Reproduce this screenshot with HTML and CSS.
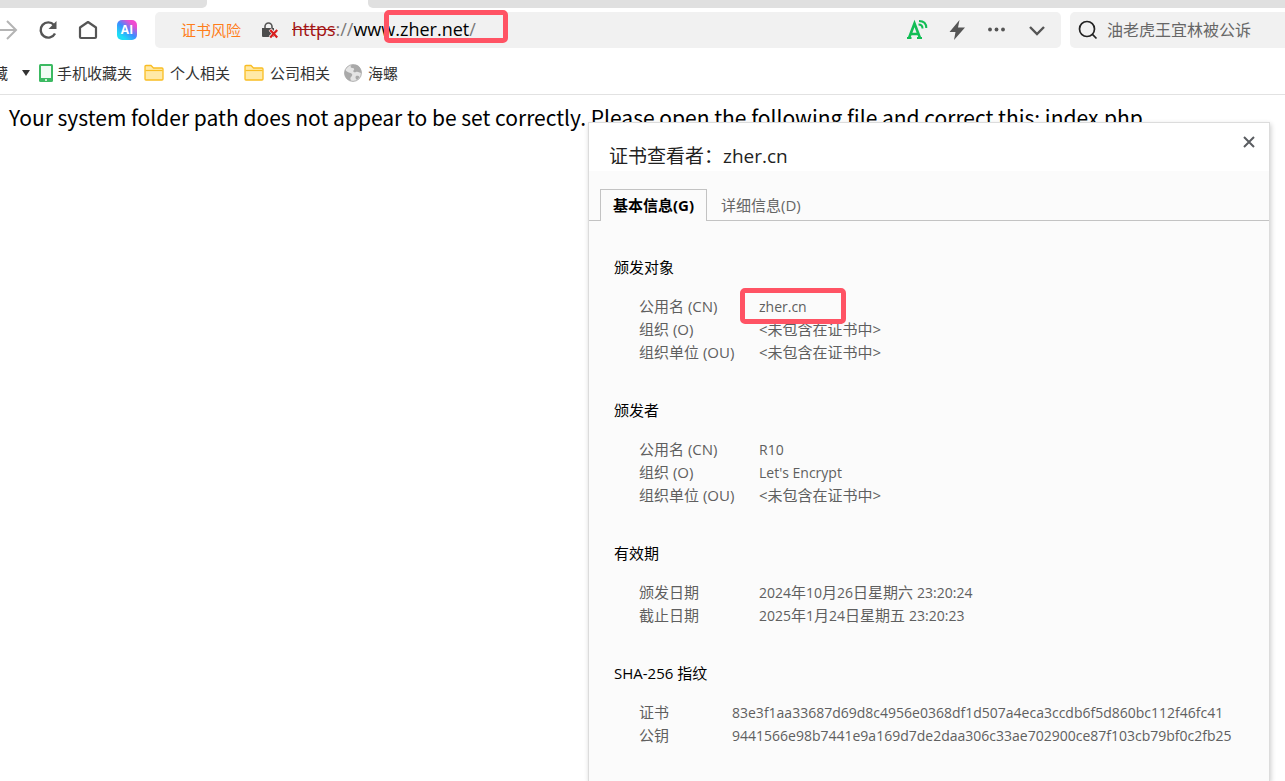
FILE: index.html
```html
<!DOCTYPE html>
<html lang="zh-CN">
<head>
    <meta charset="UTF-8">
    <title>zher.net</title>
    <link rel="stylesheet" href="styles.css">
</head>
<body>
<div class="tabstrip">
    <div class="strip-left"></div>
    <div class="strip-right"></div>
</div>

<div class="toolbar">
    <div class="nav">
        <button class="icon-btn forward" aria-label="前进">
            <svg width="24" height="24" viewBox="0 0 24 24" fill="none" stroke="#b4b4b4" stroke-width="2"><path d="M0 12H20M11 3l9 9-9 9"/></svg>
        </button>
        <button class="icon-btn" aria-label="刷新">
            <svg width="24" height="24" viewBox="0 0 24 24"><path d="M18 7A7.600 7.600 0 1 0 19 15.500" fill="none" stroke="#555" stroke-width="2.400"/><path d="M20.500 3v8h-8z" fill="#555"/></svg>
        </button>
        <button class="icon-btn" aria-label="主页">
            <svg width="24" height="24" viewBox="0 0 24 24" fill="none" stroke="#555" stroke-width="2.200" stroke-linejoin="round"><path d="M4 9.500L12 4l8 5.500V19a1 1 0 0 1-1 1H5a1 1 0 0 1-1-1z"/></svg>
        </button>
        <button class="icon-btn ai">AI</button>
    </div>
    <div class="address">
        <span class="risk">证书风险</span>
        <svg class="lock" width="18" height="18" viewBox="0 0 18 18"><path d="M4 8V5.500a3.500 3.500 0 0 1 7 0V8" fill="none" stroke="#555" stroke-width="1.600"/><path d="M1 7h12v9H2a1 1 0 0 1-1-1z" fill="#4d4d4d"/><path d="M9 8.500l7.500 8M16.500 8.500l-7.500 8" stroke="#f1f1f1" stroke-width="3.600"/><path d="M9.200 9l7 7.500M16.200 9l-7 7.500" stroke="#d81e1e" stroke-width="2.200"/></svg>
        <div class="url" role="textbox" aria-label="网址" contenteditable="true" spellcheck="false"><span class="scheme">https</span><span class="dim">://</span>www.zher.net<span class="dim">/</span></div>
        <div class="mark mark-url"></div>
        <div class="tools">
            <button class="icon-btn" aria-label="朗读">
                <svg width="24" height="24" viewBox="0 0 24 24" fill="none" stroke="#12bd55"><path d="M2 20h4.500M12 20h5" stroke-width="2"/><path d="M4 20L9.500 5.500 15 20M6.500 16h7" stroke-width="2.600"/><path d="M13.500 6.500c2.500 0 4 1.500 4 4M14 3c4.500 0 7.300 2.500 7.300 7" stroke-width="2"/></svg>
            </button>
            <button class="icon-btn" aria-label="极速模式">
                <svg width="24" height="24" viewBox="0 0 24 24" fill="#555"><path d="M14.500 2L4.500 14h6l-1.500 8 11-12.500h-7z"/></svg>
            </button>
            <button class="icon-btn" aria-label="更多">
                <svg width="24" height="24" viewBox="0 0 24 24" fill="#555"><circle cx="5" cy="11.500" r="1.900"/><circle cx="11.500" cy="11.500" r="1.900"/><circle cx="18" cy="11.500" r="1.900"/></svg>
            </button>
            <button class="icon-btn" aria-label="展开">
                <svg width="24" height="24" viewBox="0 0 24 24" fill="none" stroke="#555" stroke-width="2.400"><path d="M5 9l7 7 7-7"/></svg>
            </button>
        </div>
    </div>
    <label class="search">
        <svg width="20" height="20" viewBox="0 0 20 20" fill="none" stroke="#222" stroke-width="1.700"><circle cx="9" cy="9" r="7.500"/><path d="M14.200 14.200L18.500 18.500"/></svg>
        <input type="text" aria-label="搜索" placeholder="油老虎王宜林被公诉">
    </label>
</div>

<div class="bookmarks">
    <a class="fav" href="#"><span>藏</span><svg width="8" height="6" viewBox="0 0 8 6"><path d="M0 0h8L4 6z" fill="#333"/></svg></a>
    <a class="phone" href="#">
        <svg width="14" height="18" viewBox="0 0 14 18"><rect width="14" height="18" rx="1.500" fill="#3cba62"/><path d="M2 2h10v12H2z" fill="#f2fcf5"/><path d="M6 15.200h2v1.500H6z" fill="#fff"/></svg>
        <span>手机收藏夹</span>
    </a>
    <a class="folder" href="#">
        <svg width="20" height="18" viewBox="0 0 20 18"><path d="M1 2.500a1 1 0 0 1 1-1h5l2.500 2.500H18a1 1 0 0 1 1 1V15a1 1 0 0 1-1 1H2a1 1 0 0 1-1-1z" fill="#ffe9a6" stroke="#f9bd22" stroke-width="1.300"/><path d="M1.500 6.500h17" stroke="#f9bd22" stroke-width="1.200"/></svg>
        <span>个人相关</span>
    </a>
    <a class="folder" href="#">
        <svg width="20" height="18" viewBox="0 0 20 18"><path d="M1 2.500a1 1 0 0 1 1-1h5l2.500 2.500H18a1 1 0 0 1 1 1V15a1 1 0 0 1-1 1H2a1 1 0 0 1-1-1z" fill="#ffe9a6" stroke="#f9bd22" stroke-width="1.300"/><path d="M1.500 6.500h17" stroke="#f9bd22" stroke-width="1.200"/></svg>
        <span>公司相关</span>
    </a>
    <a class="site" href="#">
        <svg width="18" height="18" viewBox="0 0 18 18"><circle cx="9" cy="9" r="8.400" fill="#e4e4e4" stroke="#b0b0b0"/><path d="M1 5.500C2.500 8 4 8 6.500 9s2 2.500.5 4 0 2.500 0 4C3 16 .5 13 .5 9zM7.500 1c-1.500 2-1 3 1 3s2 1.500 1 2.500 1 2.500 2.500 1.500 3 .5 5.500 1c0-4-2-7.500-5.500-8.300zM12 12c1.500-.5 3 0 3.500 1l-2.500 3c-1.500-1-2-3-1-4z" fill="#a9a9a9"/></svg>
        <span>海螺</span>
    </a>
</div>

<p class="message">Your system folder path does not appear to be set correctly. Please open the following file and correct this: index.php</p>

<div class="dialog" role="dialog" aria-labelledby="title">
    <div class="head">
        <h1 id="title">证书查看者：zher.cn</h1>
        <button class="close" aria-label="关闭">
            <svg width="12" height="12" viewBox="0 0 12 12" stroke="#5a5d61" stroke-width="2"><path d="M1 1l10 10M11 1L1 11"/></svg>
        </button>
    </div>
    <div class="tabs" role="tablist">
        <button class="tab active" role="tab" aria-selected="true">基本信息(G)</button>
        <button class="tab" role="tab" aria-selected="false">详细信息(D)</button>
    </div>
    <div class="info">
        <section>
            <h2>颁发对象</h2>
            <table>
                <tr><th scope="row">公用名 (CN)</th><td class="marked"><span class="latin">zher.cn</span><div class="mark mark-cn"></div></td></tr>
                <tr><th scope="row">组织 (O)</th><td>&lt;未包含在证书中&gt;</td></tr>
                <tr><th scope="row">组织单位 (OU)</th><td>&lt;未包含在证书中&gt;</td></tr>
            </table>
        </section>
        <section>
            <h2>颁发者</h2>
            <table>
                <tr><th scope="row">公用名 (CN)</th><td><span class="latin">R10</span></td></tr>
                <tr><th scope="row">组织 (O)</th><td><span class="latin">Let's Encrypt</span></td></tr>
                <tr><th scope="row">组织单位 (OU)</th><td>&lt;未包含在证书中&gt;</td></tr>
            </table>
        </section>
        <section>
            <h2>有效期</h2>
            <table>
                <tr><th scope="row">颁发日期</th><td><span class="latin">2024</span>年<span class="latin">10</span>月<span class="latin">26</span>日星期六 <span class="latin">23:20:24</span></td></tr>
                <tr><th scope="row">截止日期</th><td><span class="latin">2025</span>年<span class="latin">1</span>月<span class="latin">24</span>日星期五 <span class="latin">23:20:23</span></td></tr>
            </table>
        </section>
        <section>
            <h2>SHA-256 指纹</h2>
            <table class="hash">
                <tr><th scope="row">证书</th><td><span class="latin">83e3f1aa33687d69d8c4956e0368df1d507a4eca3ccdb6f5d860bc112f46fc41</span></td></tr>
                <tr><th scope="row">公钥</th><td><span class="latin">9441566e98b7441e9a169d7de2daa306c33ae702900ce87f103cb79bf0c2fb25</span></td></tr>
            </table>
        </section>
    </div>
</div>
</body>
</html>
```
FILE: styles.css
```css
*{
    margin:0;
    padding:0;
    box-sizing: border-box;
}
body{
    min-height: 100vh;
    position: relative;
    overflow: hidden;
    background-color: #fff;
    font-family: "Open Sans", "Noto Sans CJK SC", sans-serif;
    font-size: 15px;
}
button{
    border: none;
    background: none;
    font-family: inherit;
    cursor: pointer;
}
svg{
    display: block;
    flex: none;
}

/* 标签栏 */
.tabstrip{
    display: flex;
    gap: 161px;
    height: 8px;
}
.strip-left{
    width: 207px;
    background-color: #e0e0e0;
    border-bottom-right-radius: 5px;
}
.strip-right{
    flex: 1;
    background-color: #e0e0e0;
    border-bottom-left-radius: 5px;
}

/* 工具栏 */
.toolbar{
    display: flex;
    padding-top: 4px;
    height: 40px;
}
.nav{
    display: flex;
    align-items: center;
    gap: 16px;
    width: 155px;
    flex: none;
}
.icon-btn{
    width: 24px;
    height: 24px;
    flex: none;
}
.forward{
    margin-left: -4px;
}
.ai{
    width: 20px;
    height: 20px;
    margin-left: 1px;
    border-radius: 5px;
    background: linear-gradient(40deg, #1edcf5 20%, #3c8cff 50%, #f04bd0 80%);
    color: #fff;
    font-size: 12px;
    font-weight: bold;
    line-height: 20px;
    text-align: center;
}
.address{
    flex: 1;
    display: flex;
    align-items: center;
    position: relative;
    height: 36px;
    padding-left: 26px;
    padding-right: 12px;
    background-color: #f1f1f1;
    border-radius: 5px;
}
.risk{
    padding-bottom: 2px;
    color: #ff7d1a;
}
.lock{
    margin-left: 20px;
}
.url{
    margin-left: 13px;
    padding-bottom: 2px;
    font-size: 18px;
    line-height: 24px;
    color: #000;
    outline: none;
}
.scheme{
    color: #a31515;
    text-decoration: line-through;
}
.dim{
    color: #7a7a7a;
}
.tools{
    display: flex;
    gap: 16px;
    margin-left: auto;
}
.search{
    display: flex;
    align-items: center;
    gap: 9px;
    width: 215px;
    height: 36px;
    margin-left: 9px;
    padding-left: 8px;
    background-color: #f1f1f1;
    border-radius: 5px 0 0 5px;
}
.search input{
    width: 160px;
    border: none;
    outline: none;
    background: none;
    font-family: inherit;
    font-size: 16px;
}
.search input::placeholder{
    color: #666;
}

/* 收藏栏 */
.bookmarks{
    display: flex;
    align-items: center;
    gap: 12px;
    height: 47px;
    padding-top: 3px;
    border-bottom: 1px solid #e2e2e2;
    overflow: hidden;
}
.bookmarks a{
    display: flex;
    align-items: center;
    gap: 6px;
    height: 22px;
    color: #333;
    text-decoration: none;
    white-space: nowrap;
}
.bookmarks .fav{
    gap: 14px;
    margin-left: -7px;
    margin-right: -3px;
}
.bookmarks .phone{
    gap: 4px;
}
.bookmarks .folder{
    margin-right: 2px;
}

/* 页面内容 */
.message{
    padding: 8px 9px;
    font-family: "Noto Sans CJK SC", sans-serif;
    font-size: 21px;
    line-height: 28px;
    color: #000;
    white-space: nowrap;
}

/* 证书窗口 */
.dialog{
    position: absolute;
    top: 122px;
    right: 15px;
    bottom: 0;
    width: 682px;
    background-color: #fbfbfb;
    border: 1px solid #dcdcdc;
    border-bottom: none;
    box-shadow: 1px 2px 5px rgba(0,0,0,.2);
}
.head{
    display: flex;
    justify-content: space-between;
    height: 48px;
    padding-left: 20px;
    padding-right: 14px;
    background-color: #fff;
}
.head h1{
    padding-top: 19px;
    font-size: 19px;
    font-weight: normal;
    line-height: 28px;
    color: #222;
}
.close{
    align-self: flex-start;
    margin-top: 13px;
}
.tabs{
    display: flex;
    padding: 18px 11px 0;
    height: 50px;
    border-bottom: 1px solid #c3c3c3;
}
.tab{
    height: 32px;
    padding: 0 13px 2px;
    border: 1px solid transparent;
    border-bottom: none;
    font-size: 15px;
    color: #666;
}
.tab.active{
    padding: 0 12px 2px;
    border-color: #c3c3c3;
    background-color: #fbfbfb;
    font-weight: bold;
    color: #000;
}
.info{
    padding: 35px 25px 0;
}
section{
    margin-bottom: 35px;
}
h2{
    margin-bottom: 17px;
    font-size: 15px;
    font-weight: normal;
    line-height: 22px;
    color: #000;
}
table{
    margin-left: 25px;
    border-collapse: collapse;
}
th{
    width: 120px;
    font-weight: normal;
    text-align: left;
}
th,
td{
    height: 23px;
    line-height: 23px;
    color: #5f5f5f;
    white-space: nowrap;
}
.hash th{
    width: 93px;
}
.latin{
    font-size: 14px;
}

/* 红框标记 */
.mark{
    position: absolute;
    border: 5px solid #ff5364;
    border-radius: 5px;
}
.mark-url{
    left: 229px;
    top: -2px;
    width: 124px;
    height: 33px;
}
.marked{
    position: relative;
}
.mark-cn{
    left: -19px;
    top: -7px;
    width: 106px;
    height: 36px;
}
```
